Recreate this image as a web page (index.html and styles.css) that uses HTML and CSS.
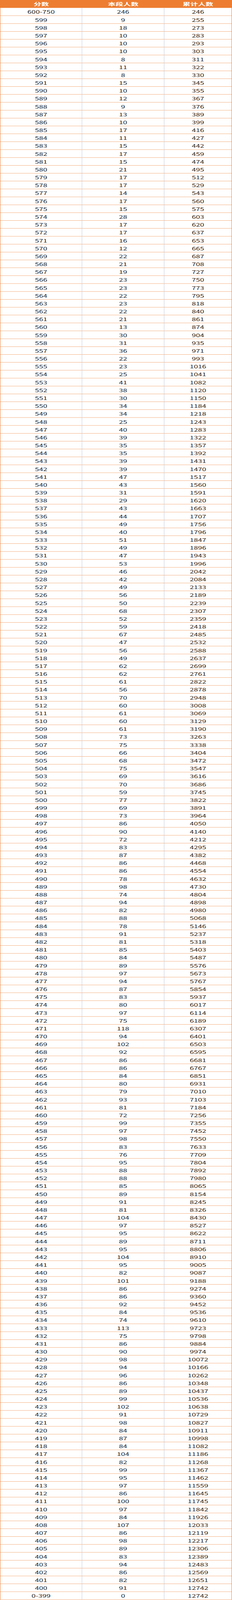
FILE: index.html
```html
<!DOCTYPE html>
<html lang="zh-CN">
<head>
<meta charset="utf-8">
<title>分数段统计表</title>
<link rel="stylesheet" href="styles.css">
</head>
<body>
<div class="frame">
<div class="score-table">
<div class="row head"><span>分数</span><span>本段人数</span><span>累计人数</span></div>
<div class="row"><span>600-750</span><span>246</span><span>246</span></div>
<div class="row"><span>599</span><span>9</span><span>255</span></div>
<div class="row"><span>598</span><span>18</span><span>273</span></div>
<div class="row"><span>597</span><span>10</span><span>283</span></div>
<div class="row"><span>596</span><span>10</span><span>293</span></div>
<div class="row"><span>595</span><span>10</span><span>303</span></div>
<div class="row"><span>594</span><span>8</span><span>311</span></div>
<div class="row"><span>593</span><span>11</span><span>322</span></div>
<div class="row"><span>592</span><span>8</span><span>330</span></div>
<div class="row"><span>591</span><span>15</span><span>345</span></div>
<div class="row"><span>590</span><span>10</span><span>355</span></div>
<div class="row"><span>589</span><span>12</span><span>367</span></div>
<div class="row"><span>588</span><span>9</span><span>376</span></div>
<div class="row"><span>587</span><span>13</span><span>389</span></div>
<div class="row"><span>586</span><span>10</span><span>399</span></div>
<div class="row"><span>585</span><span>17</span><span>416</span></div>
<div class="row"><span>584</span><span>11</span><span>427</span></div>
<div class="row"><span>583</span><span>15</span><span>442</span></div>
<div class="row"><span>582</span><span>17</span><span>459</span></div>
<div class="row"><span>581</span><span>15</span><span>474</span></div>
<div class="row"><span>580</span><span>21</span><span>495</span></div>
<div class="row"><span>579</span><span>17</span><span>512</span></div>
<div class="row"><span>578</span><span>17</span><span>529</span></div>
<div class="row"><span>577</span><span>14</span><span>543</span></div>
<div class="row"><span>576</span><span>17</span><span>560</span></div>
<div class="row"><span>575</span><span>15</span><span>575</span></div>
<div class="row"><span>574</span><span>28</span><span>603</span></div>
<div class="row"><span>573</span><span>17</span><span>620</span></div>
<div class="row"><span>572</span><span>17</span><span>637</span></div>
<div class="row"><span>571</span><span>16</span><span>653</span></div>
<div class="row"><span>570</span><span>12</span><span>665</span></div>
<div class="row"><span>569</span><span>22</span><span>687</span></div>
<div class="row"><span>568</span><span>21</span><span>708</span></div>
<div class="row"><span>567</span><span>19</span><span>727</span></div>
<div class="row"><span>566</span><span>23</span><span>750</span></div>
<div class="row"><span>565</span><span>23</span><span>773</span></div>
<div class="row"><span>564</span><span>22</span><span>795</span></div>
<div class="row"><span>563</span><span>23</span><span>818</span></div>
<div class="row"><span>562</span><span>22</span><span>840</span></div>
<div class="row"><span>561</span><span>21</span><span>861</span></div>
<div class="row"><span>560</span><span>13</span><span>874</span></div>
<div class="row"><span>559</span><span>30</span><span>904</span></div>
<div class="row"><span>558</span><span>31</span><span>935</span></div>
<div class="row"><span>557</span><span>36</span><span>971</span></div>
<div class="row"><span>556</span><span>22</span><span>993</span></div>
<div class="row"><span>555</span><span>23</span><span>1016</span></div>
<div class="row"><span>554</span><span>25</span><span>1041</span></div>
<div class="row"><span>553</span><span>41</span><span>1082</span></div>
<div class="row"><span>552</span><span>38</span><span>1120</span></div>
<div class="row"><span>551</span><span>30</span><span>1150</span></div>
<div class="row"><span>550</span><span>34</span><span>1184</span></div>
<div class="row"><span>549</span><span>34</span><span>1218</span></div>
<div class="row"><span>548</span><span>25</span><span>1243</span></div>
<div class="row"><span>547</span><span>40</span><span>1283</span></div>
<div class="row"><span>546</span><span>39</span><span>1322</span></div>
<div class="row"><span>545</span><span>35</span><span>1357</span></div>
<div class="row"><span>544</span><span>35</span><span>1392</span></div>
<div class="row"><span>543</span><span>39</span><span>1431</span></div>
<div class="row"><span>542</span><span>39</span><span>1470</span></div>
<div class="row"><span>541</span><span>47</span><span>1517</span></div>
<div class="row"><span>540</span><span>43</span><span>1560</span></div>
<div class="row"><span>539</span><span>31</span><span>1591</span></div>
<div class="row"><span>538</span><span>29</span><span>1620</span></div>
<div class="row"><span>537</span><span>43</span><span>1663</span></div>
<div class="row"><span>536</span><span>44</span><span>1707</span></div>
<div class="row"><span>535</span><span>49</span><span>1756</span></div>
<div class="row"><span>534</span><span>40</span><span>1796</span></div>
<div class="row"><span>533</span><span>51</span><span>1847</span></div>
<div class="row"><span>532</span><span>49</span><span>1896</span></div>
<div class="row"><span>531</span><span>47</span><span>1943</span></div>
<div class="row"><span>530</span><span>53</span><span>1996</span></div>
<div class="row"><span>529</span><span>46</span><span>2042</span></div>
<div class="row"><span>528</span><span>42</span><span>2084</span></div>
<div class="row"><span>527</span><span>49</span><span>2133</span></div>
<div class="row"><span>526</span><span>56</span><span>2189</span></div>
<div class="row"><span>525</span><span>50</span><span>2239</span></div>
<div class="row"><span>524</span><span>68</span><span>2307</span></div>
<div class="row"><span>523</span><span>52</span><span>2359</span></div>
<div class="row"><span>522</span><span>59</span><span>2418</span></div>
<div class="row"><span>521</span><span>67</span><span>2485</span></div>
<div class="row"><span>520</span><span>47</span><span>2532</span></div>
<div class="row"><span>519</span><span>56</span><span>2588</span></div>
<div class="row"><span>518</span><span>49</span><span>2637</span></div>
<div class="row"><span>517</span><span>62</span><span>2699</span></div>
<div class="row"><span>516</span><span>62</span><span>2761</span></div>
<div class="row"><span>515</span><span>61</span><span>2822</span></div>
<div class="row"><span>514</span><span>56</span><span>2878</span></div>
<div class="row"><span>513</span><span>70</span><span>2948</span></div>
<div class="row"><span>512</span><span>60</span><span>3008</span></div>
<div class="row"><span>511</span><span>61</span><span>3069</span></div>
<div class="row"><span>510</span><span>60</span><span>3129</span></div>
<div class="row"><span>509</span><span>61</span><span>3190</span></div>
<div class="row"><span>508</span><span>73</span><span>3263</span></div>
<div class="row"><span>507</span><span>75</span><span>3338</span></div>
<div class="row"><span>506</span><span>66</span><span>3404</span></div>
<div class="row"><span>505</span><span>68</span><span>3472</span></div>
<div class="row"><span>504</span><span>75</span><span>3547</span></div>
<div class="row"><span>503</span><span>69</span><span>3616</span></div>
<div class="row"><span>502</span><span>70</span><span>3686</span></div>
<div class="row"><span>501</span><span>59</span><span>3745</span></div>
<div class="row"><span>500</span><span>77</span><span>3822</span></div>
<div class="row"><span>499</span><span>69</span><span>3891</span></div>
<div class="row"><span>498</span><span>73</span><span>3964</span></div>
<div class="row"><span>497</span><span>86</span><span>4050</span></div>
<div class="row"><span>496</span><span>90</span><span>4140</span></div>
<div class="row"><span>495</span><span>72</span><span>4212</span></div>
<div class="row"><span>494</span><span>83</span><span>4295</span></div>
<div class="row"><span>493</span><span>87</span><span>4382</span></div>
<div class="row"><span>492</span><span>86</span><span>4468</span></div>
<div class="row"><span>491</span><span>86</span><span>4554</span></div>
<div class="row"><span>490</span><span>78</span><span>4632</span></div>
<div class="row"><span>489</span><span>98</span><span>4730</span></div>
<div class="row"><span>488</span><span>74</span><span>4804</span></div>
<div class="row"><span>487</span><span>94</span><span>4898</span></div>
<div class="row"><span>486</span><span>82</span><span>4980</span></div>
<div class="row"><span>485</span><span>88</span><span>5068</span></div>
<div class="row"><span>484</span><span>78</span><span>5146</span></div>
<div class="row"><span>483</span><span>91</span><span>5237</span></div>
<div class="row"><span>482</span><span>81</span><span>5318</span></div>
<div class="row"><span>481</span><span>85</span><span>5403</span></div>
<div class="row"><span>480</span><span>84</span><span>5487</span></div>
<div class="row"><span>479</span><span>89</span><span>5576</span></div>
<div class="row"><span>478</span><span>97</span><span>5673</span></div>
<div class="row"><span>477</span><span>94</span><span>5767</span></div>
<div class="row"><span>476</span><span>87</span><span>5854</span></div>
<div class="row"><span>475</span><span>83</span><span>5937</span></div>
<div class="row"><span>474</span><span>80</span><span>6017</span></div>
<div class="row"><span>473</span><span>97</span><span>6114</span></div>
<div class="row"><span>472</span><span>75</span><span>6189</span></div>
<div class="row"><span>471</span><span>118</span><span>6307</span></div>
<div class="row"><span>470</span><span>94</span><span>6401</span></div>
<div class="row"><span>469</span><span>102</span><span>6503</span></div>
<div class="row"><span>468</span><span>92</span><span>6595</span></div>
<div class="row"><span>467</span><span>86</span><span>6681</span></div>
<div class="row"><span>466</span><span>86</span><span>6767</span></div>
<div class="row"><span>465</span><span>84</span><span>6851</span></div>
<div class="row"><span>464</span><span>80</span><span>6931</span></div>
<div class="row"><span>463</span><span>79</span><span>7010</span></div>
<div class="row"><span>462</span><span>93</span><span>7103</span></div>
<div class="row"><span>461</span><span>81</span><span>7184</span></div>
<div class="row"><span>460</span><span>72</span><span>7256</span></div>
<div class="row"><span>459</span><span>99</span><span>7355</span></div>
<div class="row"><span>458</span><span>97</span><span>7452</span></div>
<div class="row"><span>457</span><span>98</span><span>7550</span></div>
<div class="row"><span>456</span><span>83</span><span>7633</span></div>
<div class="row"><span>455</span><span>76</span><span>7709</span></div>
<div class="row"><span>454</span><span>95</span><span>7804</span></div>
<div class="row"><span>453</span><span>88</span><span>7892</span></div>
<div class="row"><span>452</span><span>88</span><span>7980</span></div>
<div class="row"><span>451</span><span>85</span><span>8065</span></div>
<div class="row"><span>450</span><span>89</span><span>8154</span></div>
<div class="row"><span>449</span><span>91</span><span>8245</span></div>
<div class="row"><span>448</span><span>81</span><span>8326</span></div>
<div class="row"><span>447</span><span>104</span><span>8430</span></div>
<div class="row"><span>446</span><span>97</span><span>8527</span></div>
<div class="row"><span>445</span><span>95</span><span>8622</span></div>
<div class="row"><span>444</span><span>89</span><span>8711</span></div>
<div class="row"><span>443</span><span>95</span><span>8806</span></div>
<div class="row"><span>442</span><span>104</span><span>8910</span></div>
<div class="row"><span>441</span><span>95</span><span>9005</span></div>
<div class="row"><span>440</span><span>82</span><span>9087</span></div>
<div class="row"><span>439</span><span>101</span><span>9188</span></div>
<div class="row"><span>438</span><span>86</span><span>9274</span></div>
<div class="row"><span>437</span><span>86</span><span>9360</span></div>
<div class="row"><span>436</span><span>92</span><span>9452</span></div>
<div class="row"><span>435</span><span>84</span><span>9536</span></div>
<div class="row"><span>434</span><span>74</span><span>9610</span></div>
<div class="row"><span>433</span><span>113</span><span>9723</span></div>
<div class="row"><span>432</span><span>75</span><span>9798</span></div>
<div class="row"><span>431</span><span>86</span><span>9884</span></div>
<div class="row"><span>430</span><span>90</span><span>9974</span></div>
<div class="row"><span>429</span><span>98</span><span>10072</span></div>
<div class="row"><span>428</span><span>94</span><span>10166</span></div>
<div class="row"><span>427</span><span>96</span><span>10262</span></div>
<div class="row"><span>426</span><span>86</span><span>10348</span></div>
<div class="row"><span>425</span><span>89</span><span>10437</span></div>
<div class="row"><span>424</span><span>99</span><span>10536</span></div>
<div class="row"><span>423</span><span>102</span><span>10638</span></div>
<div class="row"><span>422</span><span>91</span><span>10729</span></div>
<div class="row"><span>421</span><span>98</span><span>10827</span></div>
<div class="row"><span>420</span><span>84</span><span>10911</span></div>
<div class="row"><span>419</span><span>87</span><span>10998</span></div>
<div class="row"><span>418</span><span>84</span><span>11082</span></div>
<div class="row"><span>417</span><span>104</span><span>11186</span></div>
<div class="row"><span>416</span><span>82</span><span>11268</span></div>
<div class="row"><span>415</span><span>99</span><span>11367</span></div>
<div class="row"><span>414</span><span>95</span><span>11462</span></div>
<div class="row"><span>413</span><span>97</span><span>11559</span></div>
<div class="row"><span>412</span><span>86</span><span>11645</span></div>
<div class="row"><span>411</span><span>100</span><span>11745</span></div>
<div class="row"><span>410</span><span>97</span><span>11842</span></div>
<div class="row"><span>409</span><span>84</span><span>11926</span></div>
<div class="row"><span>408</span><span>107</span><span>12033</span></div>
<div class="row"><span>407</span><span>86</span><span>12119</span></div>
<div class="row"><span>406</span><span>98</span><span>12217</span></div>
<div class="row"><span>405</span><span>89</span><span>12306</span></div>
<div class="row"><span>404</span><span>83</span><span>12389</span></div>
<div class="row"><span>403</span><span>94</span><span>12483</span></div>
<div class="row"><span>402</span><span>86</span><span>12569</span></div>
<div class="row"><span>401</span><span>82</span><span>12651</span></div>
<div class="row"><span>400</span><span>91</span><span>12742</span></div>
<div class="row"><span>0-399</span><span>0</span><span>12742</span></div>
</div>
</div>
</body>
</html>
```

FILE: styles.css
```css
html, body {
  margin: 0;
  padding: 0;
  background: #ffffff;
}

/* The capture frame is 4096px tall while the table is 6699px tall:
   the whole table is scaled vertically so every row stays in view. */
.frame {
  width: 593px;
  height: 4096px;
  overflow: hidden;
}

.score-table {
  width: 593px;
  box-sizing: border-box;
  border-left: 1px solid #ed7d31;
  border-right: 1px solid #ed7d31;
  font-family: "Noto Sans CJK SC", "Noto Sans", sans-serif;
  color: #1f1f1f;
  transform: scaleY(0.61134);
  transform-origin: 0 0;
}

.row {
  display: grid;
  grid-template-columns: 209px 210px 1fr;
  height: 33px;
  box-sizing: border-box;
  border-bottom: 1px solid #ed7d31;
}

.row > span {
  display: flex;
  align-items: center;
  justify-content: center;
  font-size: 19px;
  line-height: 1;
  border-right: 1px solid #c3cbd6;
  white-space: nowrap;
}

.row > span:last-child {
  border-right: none;
}

.row.head {
  background: #ed7d31;
  color: #ffffff;
  border-bottom: none;
}

.row.head > span {
  font-size: 19.5px;
  font-weight: 700;
  border-right: none;
}
```
